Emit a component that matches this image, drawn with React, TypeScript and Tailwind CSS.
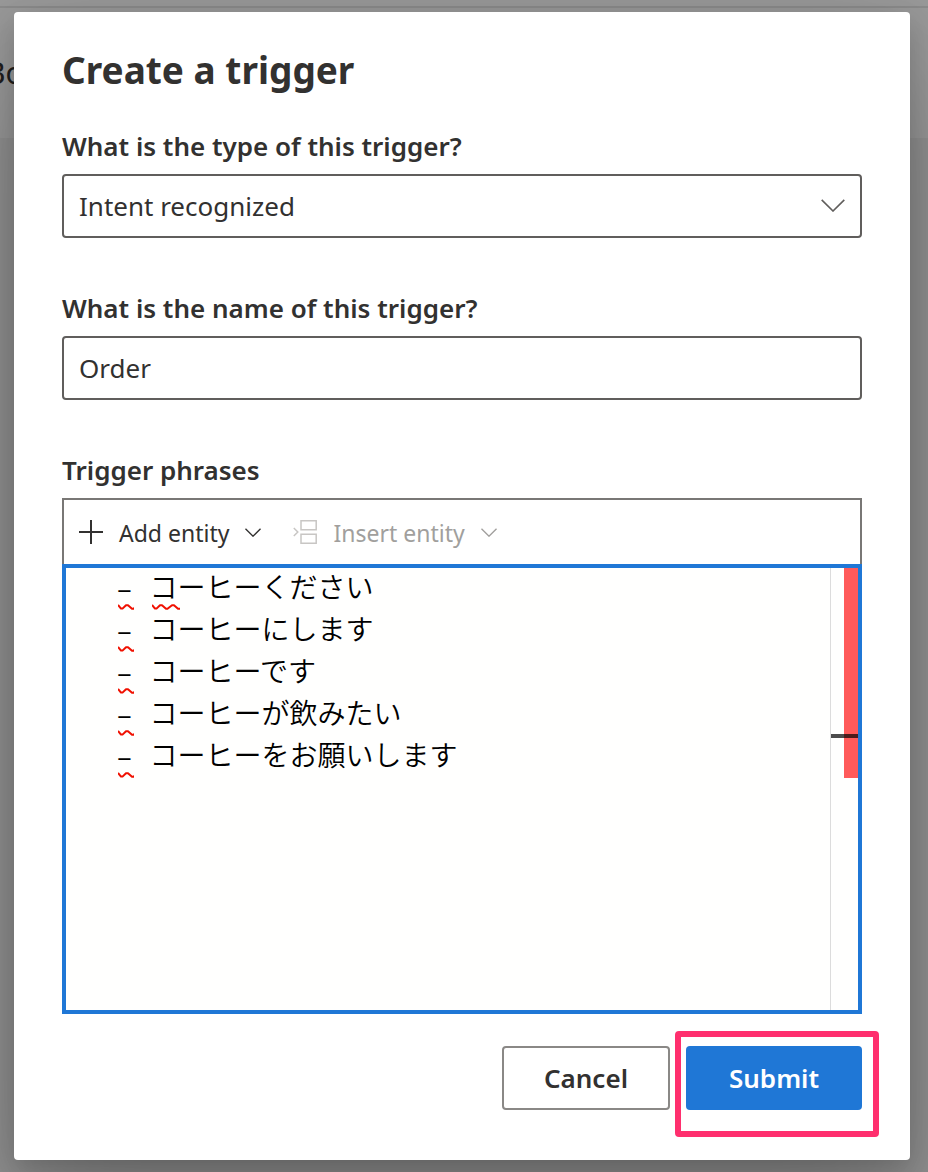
import { useState } from "react";

const PHRASES = [
  "– コーヒーください",
  "– コーヒーにします",
  "– コーヒーです",
  "– コーヒーが飲みたい",
  "– コーヒーをお願いします",
];

function Chevron({ className }: { className: string }) {
  return (
    <svg viewBox="0 0 24 13" className={className} fill="none" stroke="currentColor" aria-hidden="true">
      <path d="M0.7 0.9 L12 12 L23.3 0.9" vectorEffect="non-scaling-stroke" />
    </svg>
  );
}

function Squiggle({ className, wide }: { className: string; wide?: boolean }) {
  return (
    <svg
      viewBox={wide ? "0 0 28 6" : "0 0 16 6"}
      className={className}
      fill="none"
      stroke="#f01000"
      strokeWidth="2"
      strokeLinejoin="round"
      aria-hidden="true"
    >
      <path d="M0 1 L3 4.6 H4.5 L8 1.2 H10 L14 4.8 H15.5 L20 1.2 H22 L26 4.8 H28" />
    </svg>
  );
}

export default function App() {
  const [type, setType] = useState("Intent recognized");
  const [name, setName] = useState("Order");
  const [phrases, setPhrases] = useState(PHRASES.join("\n"));

  return (
    <div className="relative flex min-h-screen flex-col overflow-hidden bg-[#929292] font-['Noto_Sans','Noto_Sans_CJK_JP',sans-serif] text-[#323130]">
      <div className="absolute inset-x-0 top-0 h-[138px] bg-[#999999]" aria-hidden="true">
        <div className="h-2 border-b-2 border-[#8b8b8b]" />
        <div className="absolute top-[53px] -left-[14px] text-[30px] leading-[40px] text-[#1f1e1d]">Bo</div>
      </div>

      <main
        role="dialog"
        aria-labelledby="dialog-title"
        className="relative my-3 mr-[18px] ml-[14px] rounded-[4px] bg-white px-12 pt-9 pb-[50px] shadow-[0_51px_115px_rgba(0,0,0,0.22),0_10px_29px_rgba(0,0,0,0.18)]"
      >
        <h1 id="dialog-title" className="pb-7 text-[37px] leading-[44px] font-bold">
          Create a trigger
        </h1>

        <label htmlFor="trigger-type" className="block pb-0.5 text-[26px] leading-[52px] font-semibold">
          What is the type of this trigger?
        </label>
        <div className="relative">
          <select
            id="trigger-type"
            value={type}
            onChange={(e) => setType(e.target.value)}
            className="block h-16 w-full appearance-none rounded-[4px] border-2 border-[#605e5c] bg-white px-[15px] text-[26px] outline-none"
          >
            <option>Intent recognized</option>
          </select>
          <Chevron className="pointer-events-none absolute top-[25px] right-[17px] h-[13px] w-6 text-[#605e5c] [stroke-width:1.6]" />
        </div>

        <label htmlFor="trigger-name" className="mt-11 block pb-0.5 text-[26px] leading-[52px] font-semibold">
          What is the name of this trigger?
        </label>
        <input
          id="trigger-name"
          type="text"
          value={name}
          onChange={(e) => setName(e.target.value)}
          className="block h-16 w-full rounded-[4px] border-2 border-[#605e5c] bg-white px-[15px] text-[26px] outline-none"
        />

        <label htmlFor="trigger-phrases" className="mt-11 block pb-0.5 text-[26px] leading-[52px] font-semibold">
          Trigger phrases
        </label>
        <div className="flex h-[66px] items-center gap-8 border-2 border-b-0 border-[#797775] px-[15px] text-[23px]">
          <button type="button" className="flex items-center">
            <svg viewBox="0 0 24 24" className="mr-4 size-6" stroke="currentColor" strokeWidth="2" aria-hidden="true">
              <path d="M12 0V24M0 12H24" />
            </svg>
            <span className="pt-0.5">Add entity</span>
            <Chevron className="ml-4 h-[9px] w-4 [stroke-width:1.4]" />
          </button>
          <button type="button" disabled className="flex items-center text-[#a19f9d]">
            <svg
              viewBox="0 0 24 24"
              className="mr-4 size-6"
              fill="none"
              stroke="#c8c6c4"
              strokeWidth="1.5"
              aria-hidden="true"
            >
              <path d="M8 0.8H23.2V9.8H8ZM8 14.2H23.2V23.2H8Z" />
              <path d="M0.8 8L4.8 12L0.8 16" />
            </svg>
            <span className="pt-0.5">Insert entity</span>
            <Chevron className="ml-4 h-[9px] w-4 [stroke-width:1.4]" />
          </button>
        </div>

        <div className="flex h-[450px] border-4 border-[#1f77d6] bg-[#fffffe]">
          <div className="relative min-w-0 flex-1">
            <textarea
              id="trigger-phrases"
              spellCheck={false}
              value={phrases}
              onChange={(e) => setPhrases(e.target.value)}
              className="block size-full resize-none bg-transparent pt-0.5 pl-[50px] font-['Liberation_Mono','Noto_Sans_CJK_JP',monospace] text-[28px] leading-[42px] font-[350] text-black outline-none"
            />
            <div className="pointer-events-none absolute top-0 left-[52px]">
              {PHRASES.map((phrase, i) => (
                <div key={phrase} className="flex h-[42px] items-end gap-[18px]">
                  <Squiggle className="h-[6px] w-4" />
                  {i === 0 && <Squiggle wide className="h-[6px] w-7" />}
                </div>
              ))}
            </div>
          </div>
          <div className="relative flex w-7 justify-end border-l border-[#dcdcdc]" aria-hidden="true">
            <div className="h-[210px] w-[14px] bg-[#ff5a5a]" />
            <div className="absolute inset-x-0 top-[166px] h-1 bg-black/70" />
          </div>
        </div>

        <div className="mt-8 flex justify-end gap-4 text-[26px] font-semibold">
          <button type="button" className="h-16 w-[168px] rounded-[4px] border-2 border-[#8a8886] bg-white">
            Cancel
          </button>
          <div className="relative">
            <button type="button" className="h-16 w-[176px] rounded-[4px] bg-[#1f77d6] text-white">
              Submit
            </button>
            <div className="pointer-events-none absolute -top-[15px] -right-[17px] -bottom-[27px] -left-[11px] rounded-[4px] border-[6px] border-[#ff2f6e]" />
          </div>
        </div>
      </main>
    </div>
  );
}
